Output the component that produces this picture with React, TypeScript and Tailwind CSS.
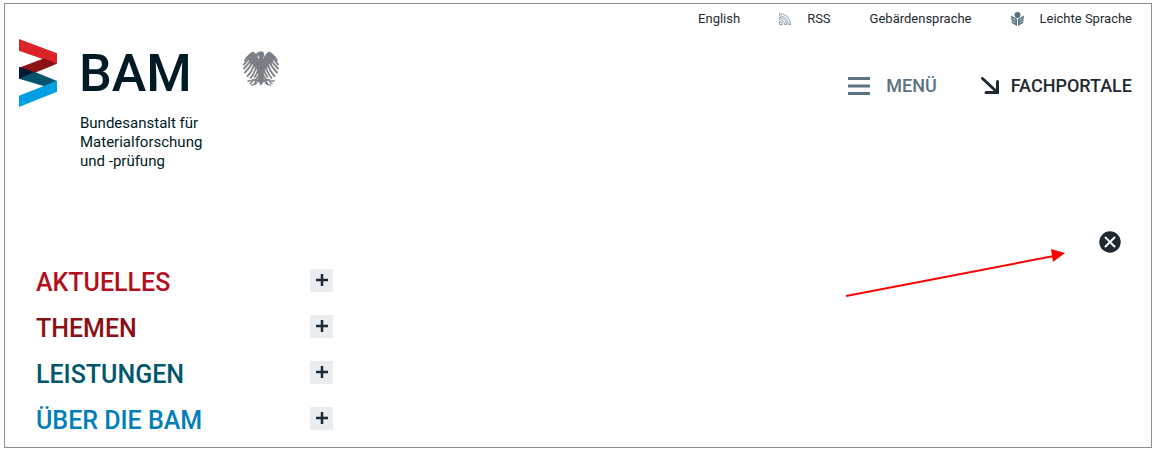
import React from 'react';

interface MenuEntry {
    label: string;
    color: string;
}

const menuEntries: MenuEntry[] = [
    { label: 'AKTUELLES', color: 'text-[#b20f20]' },
    { label: 'THEMEN', color: 'text-[#8b1014]' },
    { label: 'LEISTUNGEN', color: 'text-[#00566f]' },
    { label: 'ÜBER DIE BAM', color: 'text-[#007eb9]' },
];

const LogoMark: React.FC = () => (
    <svg viewBox="0 0 114 204" className="w-[38px] h-[68px] shrink-0" aria-hidden="true">
        <polygon points="0,0 114,43 114,75 0,35" fill="#dc2329" />
        <polygon points="76,58 114,74 48,101 0,86" fill="#8b1216" />
        <polygon points="0,119 48,99 114,126 76,142" fill="#00566f" />
        <polygon points="0,84 48,100 0,120" fill="#001a30" />
        <polygon points="114,125 114,158 0,204 0,170" fill="#009fe3" />
    </svg>
);

// Left wing, tail half and leg; mirrored for the right side
const EagleHalf: React.FC = () => (
    <g>
        <path d="M33 26 C32 15 29 7 20 1 C13 4 9 8 7 14 L13 20 L15 27 L20 26 L24 34 L30 37Z" strokeWidth="0" />
        <g fill="none" strokeWidth="3.6" strokeLinecap="round">
            <path d="M14 8 Q7 12 4 19" />
            <path d="M15 13 Q7 19 2 27" />
            <path d="M17 17 Q10 27 2 35" />
            <path d="M20 21 Q14 33 4 43" />
            <path d="M23 24 Q19 40 9 50" />
            <path d="M27 27 Q25 42 15 54" />
            <path d="M30 30 Q31 43 23 52" />
        </g>
        <path d="M33 47 L26 57 L17 59 M27 57 L23 67 M27 57 L31 62" fill="none" strokeWidth="3.6" />
        <path d="M13 66 L20 61 M16 68 Q23 69 28 63 M9 60 L17 60" fill="none" strokeWidth="2.6" />
    </g>
);

const Eagle: React.FC = () => (
    <svg viewBox="0 0 72 70" className="w-9 h-[35px] shrink-0" fill="#7b8086" stroke="#7b8086" strokeWidth="1" aria-hidden="true">
        <EagleHalf />
        <g transform="translate(72 0) scale(-1 1)">
            <EagleHalf />
        </g>
        <path d="M36 1 Q42 1 42 7 Q42 11 40 14 L44 25 Q46 38 41 46 L42 58 L36 69 L30 58 L31 46 Q26 38 28 25 L33 13 L30 9 L25 9 Q27 2 36 1Z" />
    </svg>
);

const RssIcon: React.FC = () => (
    <svg viewBox="0 0 24 24" className="w-3 h-3" fill="none" stroke="#728b96" strokeWidth="1.6" aria-hidden="true">
        <path d="M1 1 A22 22 0 0 1 23 23 H18.5 A17.5 17.5 0 0 0 1 5.5 Z" />
        <path d="M1 9 A14 14 0 0 1 15 23 H11 A10 10 0 0 0 1 13 Z" />
        <path d="M1 17 A6 6 0 0 1 7 23 H1 Z" />
    </svg>
);

const ReaderIcon: React.FC = () => (
    <svg viewBox="0 0 26 28" className="w-[13px] h-3.5" aria-hidden="true">
        <path d="M0 7 L12 14 V28 L2 22Z M26 7 L14 14 V28 L24 22Z" fill="#54707c" />
        <circle cx="13" cy="6" r="6" fill="#54707c" />
        <path d="M3 13 L9 16.5 M3 18 L9 21.5 M23 13 L17 16.5 M23 18 L17 21.5" stroke="#fff" strokeWidth="1.5" />
    </svg>
);

const Header: React.FC = () => (
    <header className="flex justify-between">
        <div className="flex pl-3.5 pt-[35px]">
            <LogoMark />
            <div className="ml-[22px] text-[#001a26]">
                <div className="h-[75px] pt-2 text-[52px] leading-[54px] font-medium">BAM</div>
                <p className="pl-px text-[15px] leading-[19px]">
                    Bundesanstalt für<br />
                    Materialforschung<br />
                    und -prüfung
                </p>
            </div>
            <div className="ml-[41px] pt-3">
                <Eagle />
            </div>
        </div>

        <div className="flex flex-col items-end pr-[19px] pt-[5px]">
            <nav aria-label="Service" className="flex items-center gap-[39px] text-[13px] leading-5 text-[#1f2933]">
                <a href="#english">English</a>
                <a href="#rss" className="flex items-center gap-4"><RssIcon />RSS</a>
                <a href="#gebaerdensprache">Gebärdensprache</a>
                <a href="#leichte-sprache" className="flex items-center gap-4"><ReaderIcon />Leichte Sprache</a>
            </nav>
            <div className="mt-[45px] flex items-center gap-11 text-lg leading-6 font-medium text-[#1f2933]">
                <button type="button" className="flex items-center gap-4 text-[#5b7480]">
                    <svg viewBox="0 0 22 18" className="w-[22px] h-[18px]" fill="currentColor" aria-hidden="true">
                        <path d="M0 0H22V3H0Z M0 7.5H22V10.5H0Z M0 15H22V18H0Z" />
                    </svg>
                    MENÜ
                </button>
                <button type="button" className="flex items-center gap-3">
                    <svg viewBox="0 0 18 18" className="w-[18px] h-[18px]" fill="none" stroke="currentColor" strokeWidth="3" strokeLinecap="round" aria-hidden="true">
                        <path d="M1.5 1.5 L16 15 M16.5 4.5 V15.5 H5" />
                    </svg>
                    FACHPORTALE
                </button>
            </div>
        </div>
    </header>
);

export default function App() {
    return (
        <div className="bg-white pt-[3px] pb-[3px] pl-1 pr-[5px] font-['Roboto','Liberation_Sans',sans-serif]">
            <div className="border border-[#8c8c8e]">
                <Header />

                <div className="relative mt-[60px] flex justify-end pr-[30px]">
                    <button type="button" aria-label="Menü schließen" className="rounded-full">
                        <svg viewBox="0 0 22 22" className="w-[22px] h-[22px]" aria-hidden="true">
                            <circle cx="11" cy="11" r="10.7" fill="#1f2933" />
                            <path d="M6.5 6.5 L15.5 15.5 M15.5 6.5 L6.5 15.5" stroke="#fff" strokeWidth="2" strokeLinecap="round" />
                        </svg>
                    </button>
                    <svg viewBox="0 0 220 50" className="absolute right-[85px] top-4 w-[220px] h-[50px] pointer-events-none" aria-hidden="true">
                        <path d="M0 49 L208 9" stroke="#ff0000" strokeWidth="2" />
                        <polygon points="205,2 219,6 207,15" fill="#ff0000" />
                    </svg>
                </div>

                <nav aria-label="Hauptmenü" className="mt-1 pl-[31px] pb-1.5">
                    <ul className="max-w-[297px]">
                        {menuEntries.map(entry => (
                            <li key={entry.label} className="flex h-[46px] items-center justify-between">
                                <a href="#menu" className={`pt-1.5 text-[25px] leading-8 font-medium ${entry.color}`}>{entry.label}</a>
                                <button type="button" aria-label={`${entry.label} aufklappen`} className="flex w-[23px] h-[23px] items-center justify-center bg-[#e9edf0]">
                                    <svg viewBox="0 0 12 12" className="w-3 h-3" stroke="#1f2933" strokeWidth="2.5" aria-hidden="true">
                                        <path d="M6 0 V12 M0 6 H12" />
                                    </svg>
                                </button>
                            </li>
                        ))}
                    </ul>
                </nav>
            </div>
        </div>
    );
}
